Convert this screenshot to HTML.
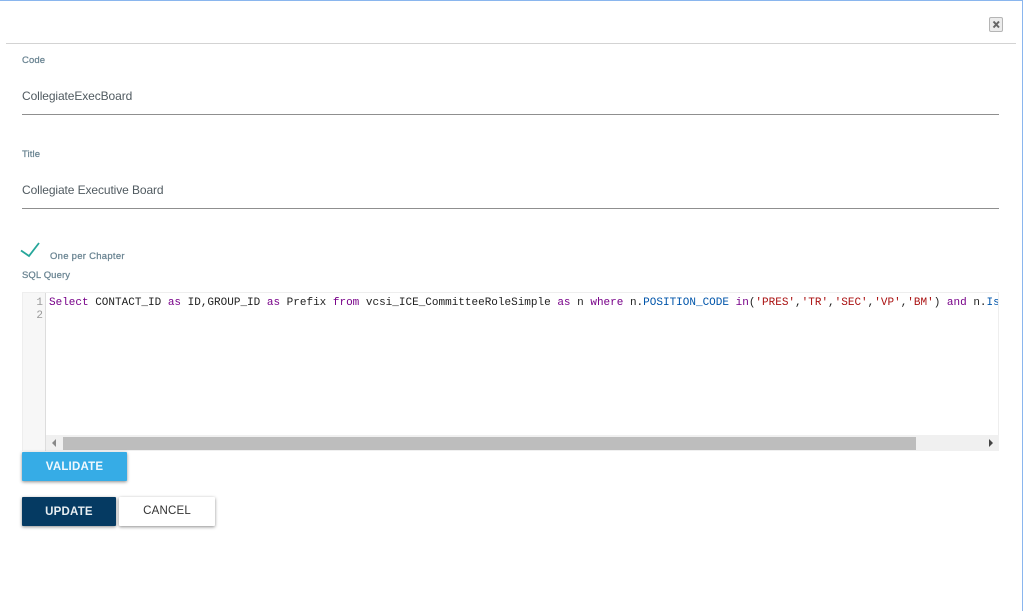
<!DOCTYPE html>
<html><head><meta charset="utf-8"><style>
html,body{margin:0;padding:0;background:#fff}
body{width:1023px;height:611px;position:relative;overflow:hidden;font-family:"Liberation Sans",sans-serif}
.a{position:absolute;white-space:pre}
.l{font-size:9.5px;color:#6a8492;font-weight:400;line-height:12px;-webkit-text-stroke:.25px #6a8492;letter-spacing:.1px}
.v{font-size:12px;color:#505a60;line-height:16px;letter-spacing:-.1px}
.u{position:absolute;left:22px;width:977px;height:1px;background:#8f8f8f}
.b{position:absolute;font-size:11.5px;text-align:center;border-radius:1px;box-shadow:0 1px 3px rgba(0,0,0,.45);line-height:29px;height:29px;letter-spacing:.2px}
.c{font-family:"Liberation Mono",monospace;font-size:11px;line-height:13px;color:#222}
.k{color:#770088}.s{color:#aa1111}.d{color:#0055aa}
</style></head><body>
<div class="a" style="left:0;top:0;width:1023px;height:1px;background:#8ab6ee"></div>
<div class="a" style="left:1022px;top:0;width:1px;height:611px;background:#8ab6ee"></div>
<div class="a" style="left:6px;top:43px;width:1010px;height:1px;background:#d3d3d3"></div>
<div class="a" style="left:989px;top:17px;width:12px;height:13px;background:#ececec;border:1px solid #b5b5b5;border-radius:2px;box-sizing:content-box"></div>
<svg class="a" style="left:989px;top:17px" width="14" height="15"><path d="M4.5 4.5L10 10.5M10 4.5L4.5 10.5" stroke="#666" stroke-width="2" fill="none"/></svg>
<div class="a l" style="left:22px;top:55px">Code</div>
<div class="a v" style="left:22px;top:88px">CollegiateExecBoard</div>
<div class="u" style="top:114px"></div>
<div class="a l" style="left:22px;top:149px">Title</div>
<div class="a v" style="left:22px;top:182px">Collegiate Executive Board</div>
<div class="u" style="top:208px"></div>
<svg class="a" style="left:20px;top:241px" width="20" height="18"><path d="M1 9.5L9 15L19 2" stroke="#26a69a" stroke-width="1.8" fill="none"/></svg>
<div class="a l" style="left:50px;top:251px;letter-spacing:.27px">One per Chapter</div>
<div class="a l" style="left:22px;top:270px">SQL Query</div>
<div class="a" style="left:22px;top:292px;width:977px;height:159px;border:1px solid #eee;border-width:1px 1px 0 1px;box-sizing:border-box;background:#fff"></div>
<div class="a" style="left:23px;top:293px;width:22px;height:158px;background:#f7f7f7;border-right:1px solid #ddd"></div>
<div class="a c" style="left:23px;top:297px;width:20px;text-align:right;color:#999">1
2</div>
<div class="a c" style="left:49px;top:297px;width:949px;overflow:hidden"><span class="k">Select</span> CONTACT_ID <span class="k">as</span> ID,GROUP_ID <span class="k">as</span> Prefix <span class="k">from</span> vcsi_ICE_CommitteeRoleSimple <span class="k">as</span> n <span class="k">where</span> n.<span class="d">POSITION_CODE</span> <span class="k">in</span>(<span class="s">'PRES'</span>,<span class="s">'TR'</span>,<span class="s">'SEC'</span>,<span class="s">'VP'</span>,<span class="s">'BM'</span>) <span class="k">and</span> n.<span class="d">Is</span></div>
<div class="a" style="left:46px;top:435px;width:953px;height:16px;background:#f0f0f0"></div>
<div class="a" style="left:63px;top:437px;width:853px;height:13px;background:#bdbdbd"></div>
<svg class="a" style="left:50px;top:438px" width="8" height="10"><path d="M6 1V9L2 5Z" fill="#888"/></svg>
<svg class="a" style="left:987px;top:438px" width="8" height="10"><path d="M2 1V9L6 5Z" fill="#444"/></svg>
<div class="b" style="left:22px;top:452px;width:105px;line-height:31px;background:#36ace6;color:#f0f8fd;font-weight:700;font-size:11.5px">VALIDATE</div>
<div class="b" style="left:22px;top:497px;width:94px;line-height:30px;background:#053a62;color:#e8eef2;font-weight:700;font-size:11.5px">UPDATE</div>
<div class="b" style="left:119px;top:497px;width:96px;background:#fff;color:#333">CANCEL</div>
</body></html>
